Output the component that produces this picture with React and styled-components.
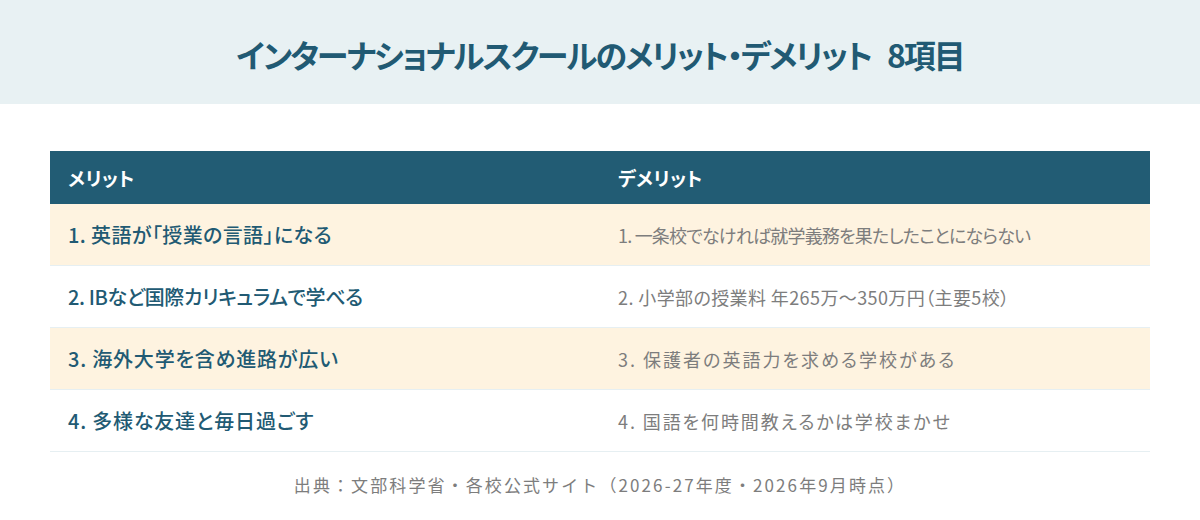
import React from 'react';
import styled, { createGlobalStyle } from 'styled-components';

const Global = createGlobalStyle`
  html, body {
    margin: 0;
    padding: 0;
    background: #ffffff;
  }
  body {
    font-family: "Noto Sans CJK JP", "Noto Sans", sans-serif;
  }
`;

const rows = [
  {
    merit: '1. 英語が「授業の言語」になる',
    meritSpacing: 0.4,
    demerit: '1. 一条校でなければ就学義務を果たしたことにならない',
    demeritSpacing: -0.8,
  },
  {
    merit: '2. IBなど国際カリキュラムで学べる',
    meritSpacing: -0.4,
    demerit: '2. 小学部の授業料 年265万〜350万円（主要5校）',
    demeritSpacing: 0.4,
  },
  {
    merit: '3. 海外大学を含め進路が広い',
    meritSpacing: 0.8,
    demerit: '3. 保護者の英語力を求める学校がある',
    demeritSpacing: 2,
  },
  {
    merit: '4. 多様な友達と毎日過ごす',
    meritSpacing: 0.8,
    demerit: '4. 国語を何時間教えるかは学校まかせ',
    demeritSpacing: 1.9,
  },
];

export default function App() {
  return (
    <Page>
      <Global />
      <Banner>
        <Title>
          インターナショナルスクールのメリット・デメリット<Count>8項目</Count>
        </Title>
      </Banner>
      <Table>
        <HeadRow>
          <HeadCell>メリット</HeadCell>
          <HeadCell>デメリット</HeadCell>
        </HeadRow>
        {rows.map((r, i) => (
          <Row key={r.merit} $shaded={i % 2 === 0}>
            <MeritCell $spacing={r.meritSpacing}>{r.merit}</MeritCell>
            <DemeritCell $spacing={r.demeritSpacing}>{r.demerit}</DemeritCell>
          </Row>
        ))}
      </Table>
      <Source>出典：文部科学省・各校公式サイト（2026-27年度・2026年9月時点）</Source>
    </Page>
  );
}

const Page = styled.div`
  width: 1200px;
  height: 520px;
  background: #ffffff;
  display: flex;
  flex-direction: column;
  align-items: center;
`;

const Banner = styled.div`
  align-self: stretch;
  height: 104px;
  background: #e8f1f3;
  display: flex;
  align-items: center;
  justify-content: center;
`;

const Title = styled.h1`
  margin: 0 0 -4px;
  font-size: 32px;
  font-weight: 700;
  color: #215a73;
  letter-spacing: -2px;
  font-feature-settings: "palt";
`;

const Count = styled.span`
  margin-left: 16px;
`;

const Table = styled.div`
  width: 1100px;
  margin-top: 47px;
  display: flex;
  flex-direction: column;
`;

const HeadRow = styled.div`
  display: grid;
  grid-template-columns: 550px 550px;
  height: 53px;
  background: #225c74;
`;

const HeadCell = styled.div`
  display: flex;
  align-items: center;
  padding: 0 0 0 18px;
  color: #ffffff;
  font-size: 19px;
  font-weight: 700;
  font-feature-settings: "palt";
  letter-spacing: 0.3px;
`;

const Row = styled.div`
  display: grid;
  grid-template-columns: 550px 550px;
  height: 61px;
  background: ${p => (p.$shaded ? '#fef3e0' : '#ffffff')};
  border-bottom: 1px solid #e6eff2;
`;

const Cell = styled.div`
  display: flex;
  align-items: center;
  padding-left: 18px;
  font-feature-settings: "palt";
  letter-spacing: ${p => p.$spacing}px;
  white-space: nowrap;
`;

const MeritCell = styled(Cell)`
  color: #215a73;
  font-size: 20px;
  font-weight: 500;
`;

const DemeritCell = styled(Cell)`
  color: #7d7d7d;
  font-size: 18px;
  font-weight: 400;
`;

const Source = styled.div`
  margin-top: 20px;
  color: #7d7d7d;
  font-size: 17px;
  letter-spacing: 2.1px;
`;
